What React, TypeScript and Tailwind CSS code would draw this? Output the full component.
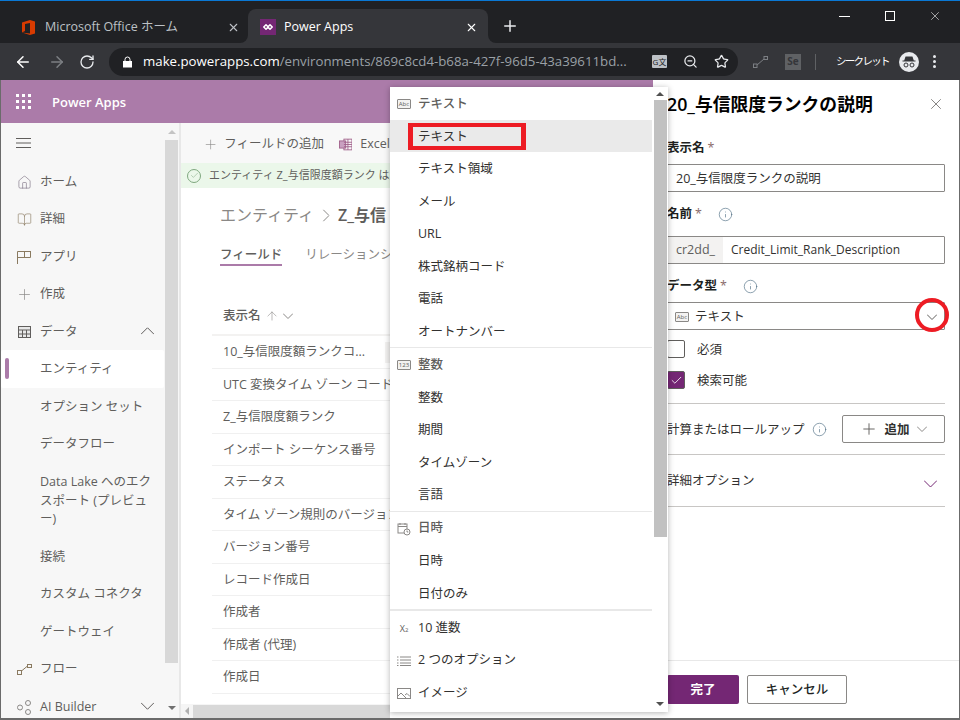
import React from 'react';
import { Plus, X, Check, ArrowLeft, ArrowRight, RotateCw, ZoomOut, Star, Info, House, BookOpen, ArrowUp } from 'lucide-react';

const font = { fontFamily: '"Open Sans", "Noto Sans CJK JP", sans-serif' };

const tableRows = [
  '10_与信限度額ランクコ...',
  'UTC 変換タイム ゾーン コード',
  'Z_与信限度額ランク',
  'インポート シーケンス番号',
  'ステータス',
  'タイム ゾーン規則のバージョン番号',
  'バージョン番号',
  'レコード作成日',
  '作成者',
  '作成者 (代理)',
  '作成日',
];

function Chevron({ width = 12, color = '#605e5c', up, className }: { width?: number; color?: string; up?: boolean; className?: string }) {
  const h = width / 2 + 1;
  return (
    <svg className={className} width={width} height={h} viewBox={`0 0 ${width} ${h}`} fill="none" stroke={color} strokeWidth="1">
      <path d={up ? `M0 ${h - 0.5}L${width / 2} 0.5L${width} ${h - 0.5}` : `M0 0.5L${width / 2} ${h - 0.5}L${width} 0.5`} />
    </svg>
  );
}

function SmallBadge({ label }: { label: string }) {
  return (
    <span className="flex h-[10px] w-[14px] items-center justify-center rounded-[1px] border border-[#8a8886] bg-[#f3f2f1] text-[6px] leading-none text-[#605e5c]">
      {label}
    </span>
  );
}

function MenuHeader({ icon, label }: { icon: React.ReactNode; label: string }) {
  return (
    <div className="flex h-[32.5px] items-center pt-[2px] text-[12.5px] font-medium text-[#605e5c]">
      <span className="flex w-[28px] justify-center">{icon}</span>
      <span>{label}</span>
    </div>
  );
}

function MenuItem({ label, active }: { label: string; active?: boolean }) {
  return (
    <div className={`flex h-[32.5px] items-center pl-[28px] pt-[3px] text-[12.5px] text-[#323130] ${active ? 'bg-[#eaeaea]' : ''}`}>
      {label}
    </div>
  );
}

function TypeDropdown() {
  return (
    <div className="absolute left-[390px] top-[87px] flex h-[625px] w-[278px] bg-white shadow-[0_1px_6px_rgba(0,0,0,0.3)]">
      <div className="relative w-[262px]">
        <MenuHeader icon={<SmallBadge label="Abc" />} label="テキスト" />
        <MenuItem label="テキスト" active />
        <div className="absolute left-[18px] top-[36px] h-[27px] w-[118px] border-x-[5px] border-y-[4px] border-[#ed1c24]" />
        <MenuItem label="テキスト領域" />
        <MenuItem label="メール" />
        <MenuItem label="URL" />
        <MenuItem label="株式銘柄コード" />
        <MenuItem label="電話" />
        <MenuItem label="オートナンバー" />
        <div className="h-px bg-[#e8e8e8]" />
        <MenuHeader icon={<SmallBadge label="123" />} label="整数" />
        <MenuItem label="整数" />
        <MenuItem label="期間" />
        <MenuItem label="タイムゾーン" />
        <MenuItem label="言語" />
        <div className="h-px bg-[#e8e8e8]" />
        <MenuHeader
          icon={
            <svg width="14" height="14" viewBox="0 0 14 14" fill="none" stroke="#8a8886" strokeWidth="1">
              <rect x="1" y="2" width="9" height="9" />
              <path d="M1 4.5h9M3 1v2M8 1v2" />
              <circle cx="10" cy="10" r="3" fill="white" />
              <path d="M10 8.5V10h1.3" />
            </svg>
          }
          label="日時"
        />
        <MenuItem label="日時" />
        <MenuItem label="日付のみ" />
        <div className="h-[2px] bg-[#e8e8e8]" />
        <div className="flex h-[32.5px] items-center pt-[2px] text-[12.5px] text-[#323130]">
          <span className="flex w-[28px] items-end justify-center text-[9px] leading-none text-[#605e5c]">
            X<span className="text-[6px] leading-none">2</span>
          </span>
          10 進数
        </div>
        <div className="flex h-[32.5px] items-center pt-[2px] text-[12.5px] text-[#323130]">
          <span className="flex w-[28px] justify-center">
            <svg width="14" height="10" viewBox="0 0 14 10" stroke="#8a8886" strokeWidth="1">
              <path d="M3 1h11M3 4h11M3 7h11M3 9.5h11M0 1h1.5M0 4h1.5M0 7h1.5M0 9.5h1.5" />
            </svg>
          </span>
          2 つのオプション
        </div>
        <div className="flex h-[32.5px] items-center pt-[2px] text-[12.5px] text-[#323130]">
          <span className="flex w-[28px] justify-center">
            <svg width="14" height="11" viewBox="0 0 14 11" fill="none" stroke="#8a8886" strokeWidth="1">
              <rect x="0.5" y="0.5" width="13" height="10" />
              <path d="M1 8l3-3 5 5M8 7l2-1.5 3 3" />
            </svg>
          </span>
          イメージ
        </div>
      </div>
      <div className="flex w-[16px] flex-col items-center">
        <div className="flex h-[13px] items-center justify-center">
          <div className="h-0 w-0 border-x-[4px] border-b-[4px] border-x-transparent border-b-[#505050]" />
        </div>
        <div className="h-[437px] w-[13px] bg-[#c1c1c1]" />
        <div className="mt-auto flex h-[16px] items-center justify-center">
          <div className="h-0 w-0 border-x-[4px] border-t-[4px] border-x-transparent border-t-[#505050]" />
        </div>
      </div>
    </div>
  );
}

function NavRow({ icon, label, right, active, tall }: { icon?: React.ReactNode; label: string; right?: React.ReactNode; active?: boolean; tall?: boolean }) {
  return (
    <div className={`relative flex items-center pt-[2px] text-[12.5px] text-[#605e5c] ${tall ? 'h-[75px] leading-[18.5px]' : 'h-[37.5px]'} ${active ? 'rounded-[2px] bg-white' : ''}`}>
      {active && <div className="absolute left-[4px] top-[8px] h-[21px] w-[4px] rounded-[2px] bg-[#ab7ba9]" />}
      <span className="flex w-[39px] shrink-0 justify-center pl-[8px]">{icon}</span>
      <span className={tall ? 'w-[112px]' : ''}>{label}</span>
      {right && <span className="absolute right-[10px] top-1/2 -translate-y-1/2">{right}</span>}
    </div>
  );
}

function Sidebar() {
  return (
    <div className="flex w-[180px] shrink-0 border-r-2 border-[#e8e8e8] bg-[#f7f7f7]">
      <div className="w-[163px] overflow-hidden">
        <div className="flex h-[39.5px] items-center pl-[15px]">
          <svg width="15" height="10" viewBox="0 0 15 10" stroke="#605e5c" strokeWidth="1">
            <path d="M0 0.5h15M0 5h15M0 9.5h15" />
          </svg>
        </div>
        <NavRow label="ホーム" icon={<House size={15} strokeWidth={1} color="#7a6f80" />} />
        <NavRow label="詳細" icon={<BookOpen size={15} strokeWidth={1} color="#8a7a60" />} />
        <NavRow
          label="アプリ"
          icon={
            <svg width="15" height="15" viewBox="0 0 15 15" fill="none" stroke="#8a7a60" strokeWidth="1">
              <path d="M0.5 14V1.5h13.5M0.5 7.5h13V1.5M7.5 1.5v6" />
            </svg>
          }
        />
        <NavRow label="作成" icon={<Plus size={17} strokeWidth={1} color="#8a8886" />} />
        <NavRow
          label="データ"
          icon={
            <svg width="13" height="12" viewBox="0 0 13 12" fill="none" stroke="#605e5c" strokeWidth="1">
              <rect x="0.5" y="0.5" width="12" height="11" fill="#e8e8e8" />
              <path d="M0.5 4h12M0.5 8h12M4.5 4v8M8.5 4v8" />
            </svg>
          }
          right={<Chevron up width={13} />}
        />
        <NavRow label="エンティティ" active />
        <NavRow label="オプション セット" />
        <NavRow label="データフロー" />
        <NavRow label="Data Lake へのエクスポート (プレビュー)" tall />
        <NavRow label="接続" />
        <NavRow label="カスタム コネクタ" />
        <NavRow label="ゲートウェイ" />
        <NavRow
          label="フロー"
          icon={
            <svg width="15" height="11" viewBox="0 0 15 11" fill="none" stroke="#8a7a60" strokeWidth="1">
              <rect x="0.5" y="6.5" width="4" height="4" />
              <rect x="10.5" y="0.5" width="4" height="3" />
              <path d="M4.5 7l6-5" />
            </svg>
          }
        />
        <NavRow
          label="AI Builder"
          icon={
            <svg width="15" height="15" viewBox="0 0 15 15" fill="none" stroke="#8a8886" strokeWidth="1">
              <circle cx="3" cy="7.5" r="2.5" />
              <circle cx="11" cy="3" r="2.5" />
              <circle cx="11" cy="12" r="2.5" />
            </svg>
          }
          right={<Chevron width={13} />}
        />
      </div>
      <div className="flex w-[15px] flex-col items-center">
        <div className="flex h-[17px] items-center justify-center">
          <div className="h-0 w-0 border-x-[4px] border-b-[4px] border-x-transparent border-b-[#c4c4c4]" />
        </div>
        <div className="h-[523px] w-[13px] bg-[#d8d8d8]" />
        <div className="mt-auto flex h-[20px] items-center justify-center">
          <div className="h-0 w-0 border-x-[4px] border-t-[4px] border-x-transparent border-t-[#707070]" />
        </div>
      </div>
    </div>
  );
}

function MainArea() {
  return (
    <div className="flex w-[209px] shrink-0 flex-col overflow-hidden bg-white">
      <div className="flex h-[40px] shrink-0 items-center overflow-hidden whitespace-nowrap bg-[#f8f8f8] pl-[22px] pt-[2px] text-[12.5px] text-[#605e5c]">
        <Plus size={17} strokeWidth={1} color="#8a8886" />
        <span className="ml-[6px]">フィールドの追加</span>
        <svg className="ml-[15px]" width="15" height="13" viewBox="0 0 15 13" fill="none" stroke="#a0608a" strokeWidth="1">
          <rect x="5.5" y="0.5" width="9" height="12" />
          <rect x="0.5" y="2.5" width="7" height="8" fill="#c9a0c0" />
          <path d="M5.5 4h9M5.5 6.5h9M5.5 9h9M10 0.5v12" />
        </svg>
        <span className="ml-[8px]">Excel</span>
      </div>
      <div className="flex h-[25px] shrink-0 items-center overflow-hidden whitespace-nowrap bg-[#ebf7ea] pl-[6px] text-[11px] text-[#605e5c]">
        <span className="flex h-[14px] w-[14px] shrink-0 items-center justify-center rounded-full border border-[#7fa87f]">
          <Check size={9} strokeWidth={1} color="#5a8a5a" />
        </span>
        <span className="ml-[8px]">エンティティ Z_与信限度額ランク は正</span>
      </div>
      <div className="flex h-[39px] shrink-0 items-end overflow-hidden whitespace-nowrap pl-[39px] text-[16px] text-[#8a8886]">
        <span>エンティティ</span>
        <Chevron className="mx-[6px] mb-[8px] -rotate-90" width={12} color="#8a8886" />
        <span className="font-semibold text-[#605e5c]">Z_与信</span>
      </div>
      <div className="flex shrink-0 gap-[23px] overflow-hidden whitespace-nowrap pl-[39px] pt-[18px] text-[12.5px] text-[#8a8886]">
        <span className="shrink-0 border-b-2 border-[#ab7ba9] font-medium leading-[19px] text-[#605e5c]">フィールド</span>
        <span className="leading-[19px]">リレーションシ</span>
      </div>
      <div className="ml-[31px] mt-[32px] flex-1 overflow-hidden whitespace-nowrap text-[12.5px] text-[#605e5c]">
        <div className="flex h-[38px] items-center gap-[4px] border-b-[2px] border-[#f3f2f1] pl-[11px] font-medium">
          表示名
          <ArrowUp size={14} strokeWidth={1} color="#8a8886" />
          <Chevron width={10} color="#8a8886" />
        </div>
        {tableRows.map((label, i) => (
          <div key={label} className="relative flex h-[32.5px] items-center overflow-hidden border-b border-[#f0f0f0] pl-[11px] pt-[2px]">
            {label}
            {i === 0 && <div className="absolute left-[173px] top-[6px] h-[21px] w-[30px] bg-[#f3f2f1]" />}
          </div>
        ))}
      </div>
      <div className="flex h-[14px] shrink-0 items-center bg-[#f5f5f5]">
        <div className="flex w-[12px] justify-center">
          <div className="h-0 w-0 border-y-[4px] border-r-[4px] border-y-transparent border-r-[#b0b0b0]" />
        </div>
        <div className="h-[13px] w-[197px] bg-[#d8d8d8]" />
      </div>
    </div>
  );
}

function FieldLabel({ label, info }: { label: string; info?: string }) {
  return (
    <div className="flex h-[19px] items-center pt-[2px] text-[12.5px] font-semibold text-[#201f1e]">
      {label}
      <span className="ml-[3px] font-normal text-[#8a6a6a]">*</span>
      {info && (
        <span className={info}>
          <Info size={15} strokeWidth={1} color="#4a6a80" />
        </span>
      )}
    </div>
  );
}

function SidePanel() {
  return (
    <div className="flex w-[306px] shrink-0 flex-col whitespace-nowrap bg-white px-[14px]">
      <div className="flex h-[48px] items-center justify-between text-[17.8px] font-semibold text-black">
        <span>20_与信限度ランクの説明</span>
        <X size={18} strokeWidth={1} color="#605e5c" />
      </div>
      <div className="mt-[10px]"><FieldLabel label="表示名" /></div>
      <div className="mt-[7px] flex h-[28px] items-center rounded-[1px] border border-[#8a8886] pl-[8px] pt-[2px] text-[12.5px] text-[#323130]">
        20_与信限度ランクの説明
      </div>
      <div className="mt-[12px]"><FieldLabel label="名前" info="ml-[16px]" /></div>
      <div className="mt-[13px] flex h-[28px] items-center rounded-[1px] border border-[#8a8886] text-[12.5px] text-[#323130]">
        <span className="flex h-full w-[55px] items-center justify-center bg-[#f3f2f1] text-[#605e5c]">cr2dd_</span>
        <span className="ml-[8px] text-[12px]">Credit_Limit_Rank_Description</span>
      </div>
      <div className="mt-[12px]"><FieldLabel label="データ型" info="ml-[16px]" /></div>
      <div className="mt-[7px] flex h-[28px] items-center rounded-[1px] border border-[#8a8886] pl-[7px] pr-[7px] pt-[2px] text-[12.5px] text-[#323130]">
        <SmallBadge label="Abc" />
        <span className="ml-[6px]">テキスト</span>
        <Chevron className="ml-auto" width={10} />
      </div>
      <div className="mt-[10px] flex h-[18px] items-center text-[12.5px] text-[#323130]">
        <span className="h-[18px] w-[18px] rounded-[2px] border border-[#605e5c]" />
        <span className="ml-[12px] pt-[2px]">必須</span>
      </div>
      <div className="mt-[13px] flex h-[18px] items-center text-[12.5px] text-[#323130]">
        <span className="flex h-[18px] w-[18px] items-center justify-center rounded-[2px] border border-[#605e5c] bg-[#742774]">
          <Check size={13} strokeWidth={1.5} color="white" />
        </span>
        <span className="ml-[12px] pt-[2px]">検索可能</span>
      </div>
      <div className="mt-[14px] h-px bg-[#c8c6c4]" />
      <div className="flex h-[50px] items-center text-[12.5px] text-[#323130]">
        <span className="pt-[2px]">計算またはロールアップ</span>
        <span className="ml-[7px]"><Info size={15} strokeWidth={1} color="#4a6a80" /></span>
        <div className="ml-auto flex h-[28px] w-[103px] items-center justify-center rounded-[2px] border border-[#8a8886] font-semibold">
          <Plus size={18} strokeWidth={1.25} color="#605e5c" />
          <span className="ml-[6px] pt-[2px]">追加</span>
          <Chevron className="ml-[7px]" width={10} color="#8a8886" />
        </div>
      </div>
      <div className="h-px bg-[#c8c6c4]" />
      <div className="flex h-[51px] items-center justify-between pr-[8px] text-[12.5px] text-[#323130]">
        <span className="pt-[2px]">詳細オプション</span>
        <Chevron className="mt-[6px]" width={13} color="#742774" />
      </div>
      <div className="h-px bg-[#c8c6c4]" />
      <div className="mt-auto -mx-[14px] h-px bg-[#e8e8e8]" />
      <div className="flex h-[57px] items-start gap-[8px] pt-[14px] text-[12.5px]">
        <button className="flex h-[29px] w-[72px] items-center justify-center rounded-[2px] bg-[#742774] pt-[2px] font-semibold text-white">完了</button>
        <button className="flex h-[29px] w-[100px] items-center justify-center rounded-[2px] border border-[#8a8886] pt-[2px] font-medium text-[#201f1e]">キャンセル</button>
      </div>
    </div>
  );
}

function BrowserChrome() {
  return (
    <div className="shrink-0">
      <div className="h-px bg-[#0a78d4]" />
      <div className="flex h-[42px] bg-[#35363a] text-[12.5px]">
        <div className="flex w-[248px] items-center rounded-br-lg bg-[#202124] pl-[22px] pr-[8px] pt-[10px] text-[#bdc1c6]">
          <svg width="13" height="15" viewBox="0 0 13 15">
            <path d="M0 2.5L8 0l5 1.5v12L8 15l-8-2.5L8 13.5V3L3 4v7l-3 1.5z" fill="#d83b01" />
          </svg>
          <span className="ml-[10px]">Microsoft Office ホーム</span>
          <X className="ml-auto" size={13} color="#bdc1c6" />
        </div>
        <div className="w-[240px] bg-[#202124] pt-[8px]">
          <div className="flex h-[34px] items-center rounded-t-lg bg-[#35363a] pl-[12px] pr-[10px] pt-[2px] text-white">
            <span className="flex h-[16px] w-[16px] items-center justify-center bg-[#742774]">
              <svg width="10" height="6" viewBox="0 0 10 6" fill="none" stroke="white" strokeWidth="1.5">
                <path d="M3 0.8L5.2 3 3 5.2 0.8 3zM7 0.8L9.2 3 7 5.2 4.8 3z" />
              </svg>
            </span>
            <span className="ml-[8px]">Power Apps</span>
            <X className="ml-auto" size={13} color="white" />
          </div>
        </div>
        <div className="flex flex-1 rounded-bl-lg bg-[#202124] pr-[3px]">
          <Plus className="ml-[13px] mt-[16px]" size={18} color="#e8eaed" />
          <div className="ml-auto flex h-[30px] items-center">
            <div className="flex w-[45px] justify-center"><div className="h-px w-[11px] bg-white" /></div>
            <div className="flex w-[45px] justify-center"><div className="h-[10px] w-[10px] border border-white" /></div>
            <div className="flex w-[45px] justify-center"><X size={14} strokeWidth={1} color="white" /></div>
          </div>
        </div>
      </div>
      <div className="flex h-[37px] items-center whitespace-nowrap bg-[#35363a] pl-[14px]">
        <ArrowLeft size={18} color="white" />
        <ArrowRight className="ml-[16px]" size={18} color="#7c7f83" />
        <RotateCw className="ml-[13px]" size={16} color="#e8eaed" />
        <div className="ml-[14px] flex h-[28px] w-[629px] items-center rounded-full bg-[#202124] pl-[13px] pr-[9px] text-[13.25px]">
          <svg width="11" height="12" viewBox="0 0 11 12" fill="white" stroke="white">
            <rect x="1" y="5" width="9" height="6.5" stroke="none" />
            <path d="M3 5V3.5a2.5 2.5 0 0 1 5 0V5" fill="none" />
          </svg>
          <span className="ml-[10px] text-white">make.powerapps.com</span>
          <span className="text-[#9aa0a6]">/environments/869c8cd4-b68a-427f-96d5-43a39611bd...</span>
          <span className="ml-auto flex items-center gap-[16px]">
            <span className="flex h-[13px] w-[15px] items-center justify-center rounded-[1px] bg-[#bdc1c6] text-[8px] leading-none text-[#202124]">G文</span>
            <ZoomOut size={15} color="#e8eaed" />
            <Star size={15} color="#e8eaed" />
          </span>
        </div>
        <svg className="ml-[15px]" width="15" height="12" viewBox="0 0 15 12" fill="none" stroke="#7c7f83" strokeWidth="1">
          <rect x="0.5" y="8" width="3.5" height="3.5" />
          <rect x="11" y="0.5" width="3.5" height="3" />
          <path d="M4 9l7-6" />
        </svg>
        <span className="ml-[17px] flex h-[16px] w-[16px] items-center justify-center bg-[#5f6164] text-[10px] font-bold text-[#35363a]">Se</span>
        <div className="ml-[14px] h-[16px] w-px bg-[#5f6164]" />
        <span className="ml-[20px] text-[10.5px] tracking-[-1.7px] text-white">シークレット</span>
        <span className="ml-[10px] flex h-[20px] w-[20px] items-center justify-center rounded-full bg-[#e8eaed]">
          <svg width="14" height="12" viewBox="0 0 14 12" fill="none" stroke="#35363a">
            <path d="M4 1h6l1 3H3zM0.5 5h13" strokeWidth="1.2" fill="#35363a" />
            <circle cx="4" cy="9" r="2" />
            <circle cx="10" cy="9" r="2" />
          </svg>
        </span>
        <span className="ml-[14px] flex flex-col gap-[2px]">
          <span className="h-[3px] w-[3px] rounded-full bg-[#e8eaed]" />
          <span className="h-[3px] w-[3px] rounded-full bg-[#e8eaed]" />
          <span className="h-[3px] w-[3px] rounded-full bg-[#e8eaed]" />
        </span>
      </div>
    </div>
  );
}

export default function App() {
  return (
    <div className="relative flex h-[720px] w-[960px] flex-col overflow-hidden" style={font}>
      <BrowserChrome />
      <div className="flex min-h-0 flex-1 border-x border-b-2 border-[#6b6b6b]">
        <div className="flex w-[652px] shrink-0 flex-col bg-white">
          <div className="flex h-[43px] shrink-0 items-center bg-[#ab7ba9] pl-[15px]">
            <div className="grid grid-cols-3 gap-[3px]">
              {Array.from({ length: 9 }).map((_, i) => (
                <span key={i} className="h-[3px] w-[3px] bg-white" />
              ))}
            </div>
            <span className="ml-[21px] pt-[2px] text-[13px] font-semibold text-white">Power Apps</span>
          </div>
          <div className="flex min-h-0 flex-1">
            <Sidebar />
            <MainArea />
          </div>
        </div>
        <SidePanel />
      </div>
      <TypeDropdown />
      <div className="absolute left-[915px] top-[298px] h-[34px] w-[34px] rounded-full border-[4px] border-[#ed1c24]" />
    </div>
  );
}
